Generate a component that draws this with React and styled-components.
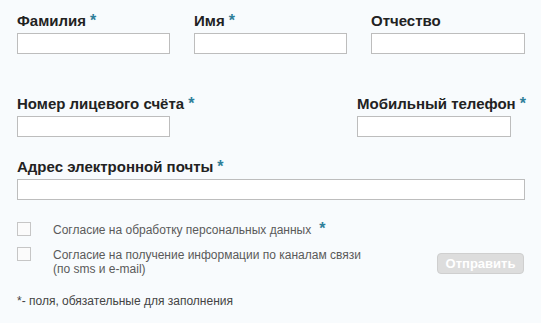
import React from "react";
import styled, { createGlobalStyle } from "styled-components";

const GlobalStyle = createGlobalStyle`
  html, body {
    margin: 0;
    padding: 0;
    background: #f8fbfd;
  }
  body {
    font-family: "Liberation Sans", Arial, sans-serif;
  }
`;

const Form = styled.form`
  width: 541px;
  height: 323px;
  box-sizing: border-box;
  padding: 12px 16px 0 17px;
  background: #f8fbfd;
`;

const TripleRow = styled.div`
  display: grid;
  grid-template-columns: 153px 153px 154px;
  column-gap: 24px;
`;

const SplitRow = styled.div`
  display: flex;
  justify-content: space-between;
  margin-top: ${(p) => p.$top || 0}px;
`;

const Field = styled.div`
  display: flex;
  flex-direction: column;
  width: ${(p) => (p.$width ? `${p.$width}px` : "auto")};
  margin-top: ${(p) => p.$top || 0}px;
`;

const Label = styled.label`
  font-size: 15px;
  line-height: 18px;
  font-weight: bold;
  color: #222;
  margin-bottom: 3px;
  white-space: nowrap;
`;

const Star = styled.span`
  color: #2f7f9a;
  font-weight: bold;
  font-size: 16px;
  line-height: 0;
  margin-left: ${(p) => p.$gap || 4}px;
`;

const Input = styled.input`
  box-sizing: border-box;
  width: ${(p) => (p.$width ? `${p.$width}px` : "100%")};
  height: 21px;
  border: 1px solid #bdbdbd;
  background: #fff;
  padding: 0 4px;
  margin: 0;
  font: inherit;
`;

const Consents = styled.div`
  margin-top: 22px;
`;

const CheckRow = styled.div`
  display: flex;
  align-items: flex-start;
  margin-top: ${(p) => p.$top || 0}px;
`;

const Box = styled.span`
  flex: none;
  box-sizing: border-box;
  width: 14px;
  height: 14px;
  border: 1px solid #c6c6c6;
  background: #fbfbfb;
`;

const CheckText = styled.span`
  margin-left: 22px;
  padding-top: 1px;
  font-size: 12px;
  line-height: 14px;
  color: #5a5a5a;
`;

const Bottom = styled.div`
  display: flex;
  justify-content: space-between;
  align-items: flex-start;
  margin-top: 10px;
`;

const Button = styled.button`
  box-sizing: border-box;
  width: 87px;
  height: 21px;
  margin: 6px 1px 0 0;
  border: 1px solid #cfcfcf;
  border-radius: 4px;
  background: #dddddd;
  color: #fff;
  font-family: "Liberation Sans", Arial, sans-serif;
  font-weight: bold;
  font-size: 13px;
  padding: 0;
`;

const Note = styled.div`
  margin-top: 17px;
  font-size: 12px;
  line-height: 16px;
  color: #444;
`;

export default function App() {
  return (
    <>
      <GlobalStyle />
      <Form>
        <TripleRow>
          <Field>
            <Label>
              Фамилия<Star>*</Star>
            </Label>
            <Input />
          </Field>
          <Field>
            <Label>
              Имя<Star>*</Star>
            </Label>
            <Input />
          </Field>
          <Field>
            <Label>Отчество</Label>
            <Input />
          </Field>
        </TripleRow>

        <SplitRow $top={41}>
          <Field $width={153}>
            <Label>
              Номер лицевого счёта<Star>*</Star>
            </Label>
            <Input />
          </Field>
          <Field $width={168}>
            <Label>
              Мобильный телефон<Star>*</Star>
            </Label>
            <Input $width={154} />
          </Field>
        </SplitRow>

        <Field $top={21}>
          <Label>
            Адрес электронной почты<Star>*</Star>
          </Label>
          <Input />
        </Field>

        <Consents>
          <CheckRow>
            <Box />
            <CheckText>
              Согласие на обработку персональных данных
              <Star $gap={8}>*</Star>
            </CheckText>
          </CheckRow>
          <Bottom>
            <CheckRow>
              <Box />
              <CheckText>
                Согласие на получение информации по каналам связи
                <br />
                (по sms и e-mail)
              </CheckText>
            </CheckRow>
            <Button type="button">Отправить</Button>
          </Bottom>
        </Consents>

        <Note>*- поля, обязательные для заполнения</Note>
      </Form>
    </>
  );
}
